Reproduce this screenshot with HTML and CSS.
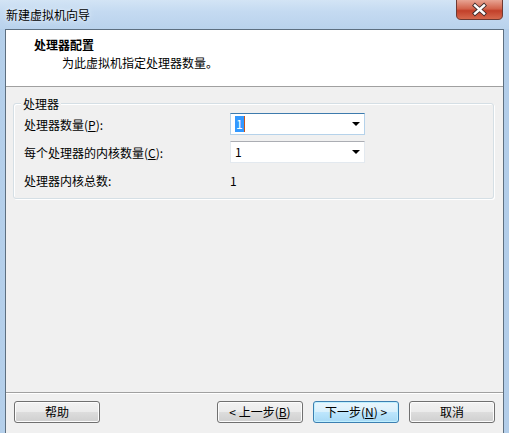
FILE: index.html
```html
<!DOCTYPE html>
<html lang="zh-CN">
<head>
<meta charset="utf-8">
<title>新建虚拟机向导</title>
<link rel="stylesheet" href="styles.css">
</head>
<body>
<div class="window">
  <div class="titlebar">
    <div class="title">新建虚拟机向导</div>
    <div class="close">
      <svg width="47" height="20" viewBox="0 0 47 20">
        <defs>
          <linearGradient id="cg" x1="0" y1="0" x2="0" y2="1">
            <stop offset="0" stop-color="#e8a493"/>
            <stop offset="0.45" stop-color="#d2634b"/>
            <stop offset="0.55" stop-color="#c2402a"/>
            <stop offset="1" stop-color="#d76b4f"/>
          </linearGradient>
        </defs>
        <path d="M0.5 0 V15 Q0.5 19.5 5 19.5 H42 Q46.5 19.5 46.5 15 V0" fill="url(#cg)" stroke="#6e3a33"/>
        <path d="M19 5.5 L28 13.5 M28 5.5 L19 13.5" stroke="#3b2a2a" stroke-width="4.2" stroke-linecap="square"/>
        <path d="M19 5.5 L28 13.5 M28 5.5 L19 13.5" stroke="#ffffff" stroke-width="2.4" stroke-linecap="square"/>
      </svg>
    </div>
  </div>
  <div class="client">
    <div class="header">
      <div class="h-title">处理器配置</div>
      <div class="h-sub">为此虚拟机指定处理器数量。</div>
    </div>
    <div class="main">
      <div class="group">
        <span class="legend">处理器</span>
        <div class="grid">
          <div class="label">处理器数量(<u>P</u>):</div>
          <div class="combo focused">
            <span class="val"><span class="sel">1</span><span class="caret"></span></span>
            <span class="arrow"></span>
          </div>
          <div class="label">每个处理器的内核数量(<u>C</u>):</div>
          <div class="combo">
            <span class="val">1</span>
            <span class="arrow"></span>
          </div>
          <div class="label">处理器内核总数:</div>
          <div class="static">1</div>
        </div>
      </div>
    </div>
    <div class="footer">
      <button class="btn">帮助</button>
      <div class="spacer"></div>
      <button class="btn">&lt; 上一步(<u>B</u>)</button>
      <button class="btn default">下一步(<u>N</u>) &gt;</button>
      <button class="btn">取消</button>
    </div>
  </div>
</div>
</body>
</html>
```

FILE: styles.css
```css
* { box-sizing: border-box; }
html, body {
  margin: 0;
  padding: 0;
}
body {
  width: 509px;
  height: 433px;
  overflow: hidden;
  font-family: "Noto Sans CJK SC", "Noto Sans", sans-serif;
  font-size: 12px;
  color: #000;
  background: #bcd5ee;
}
.window {
  width: 509px;
  height: 433px;
  display: flex;
  flex-direction: column;
  background: linear-gradient(90deg, #b4cfea 0%, #c9ddf2 20%, #bcd6ef 50%, #c6dbf1 80%, #b2cde9 100%);
}
.titlebar {
  height: 29px;
  display: flex;
  align-items: flex-start;
  background: linear-gradient(180deg, #d3e4f5 0%, #c4daf1 40%, #b9d2ec 100%);
}
.title {
  padding: 6px 0 0 6px;
  line-height: 17px;
  color: #000;
  text-shadow: 0 0 6px #e8f2fc, 0 0 3px #e8f2fc;
}
.close {
  margin-left: auto;
  margin-right: 6px;
  height: 20px;
  line-height: 0;
}
.client {
  flex: 1;
  margin: 0 5px 0 5px;
  border: 1px solid #5d6f80;
  border-bottom: none;
  background: #f0f0f0;
  display: flex;
  flex-direction: column;
}
.header {
  height: 57px;
  background: #fff;
  border-bottom: 1px solid #a0a0a0;
  padding: 7px 0 0 28px;
}
.h-title {
  font-weight: bold;
  line-height: 16px;
}
.h-sub {
  line-height: 17px;
  padding-left: 28px;
  padding-top: 1px;
}
.main {
  flex: 1;
  padding: 16px 9px 0 7px;
}
.group {
  position: relative;
  height: 96px;
  border: 1px solid #d5dfe5;
  border-radius: 3px;
  box-shadow: inset 1px 1px 0 #fff, 1px 1px 0 #fff;
  padding: 9px 0 0 10px;
}
.legend {
  position: absolute;
  left: 7px;
  top: -9px;
  padding: 0 2px 0 2px;
  line-height: 17px;
  background: #f0f0f0;
}
.grid {
  display: grid;
  grid-template-columns: 206px 135px;
  grid-auto-rows: 22px;
  row-gap: 6px;
  align-items: center;
}
.label {
  line-height: 17px;
}
.label u, .btn u {
  text-decoration: underline;
  text-underline-offset: 1px;
}
.combo {
  height: 22px;
  background: #fff;
  border: 1px solid #e3e9ef;
  border-top-color: #abadb3;
  display: flex;
  align-items: center;
  padding: 0 4px 0 4px;
}
.combo.focused {
  border-color: #b5d2ea;
  border-top-color: #3d7bad;
}
.val {
  flex: 1;
  display: flex;
  align-items: center;
  line-height: 16px;
}
.sel {
  background: #3399ff;
  color: #fff;
  padding: 0 1px;
  line-height: 16px;
}
.caret {
  width: 1px;
  height: 16px;
  background: #c8541a;
}
.arrow {
  width: 0;
  height: 0;
  border-left: 4px solid transparent;
  border-right: 4px solid transparent;
  border-top: 4px solid #000;
}
.static {
  line-height: 17px;
}
.footer {
  height: 41px;
  border-top: 1px solid #a0a0a0;
  box-shadow: inset 0 1px 0 #fff;
  display: flex;
  align-items: flex-start;
  padding: 8px 8px 0 8px;
  gap: 10px;
}
.spacer {
  flex: 1;
}
.btn {
  width: 86px;
  height: 22px;
  margin: 0;
  padding: 0;
  font: inherit;
  color: #000;
  line-height: 18px;
  border: 1px solid #707070;
  border-radius: 3px;
  background: linear-gradient(180deg, #f2f2f2 0%, #ebebeb 50%, #dddddd 51%, #cfcfcf 100%);
  box-shadow: inset 0 0 0 1px #fcfcfc;
}
.btn.default {
  border-color: #3c7fb1;
  background: linear-gradient(180deg, #eaf6fd 0%, #d9f0fc 50%, #bee6fd 51%, #a7d9f5 100%);
  box-shadow: inset 0 0 0 1px #bff0ff;
}
```
